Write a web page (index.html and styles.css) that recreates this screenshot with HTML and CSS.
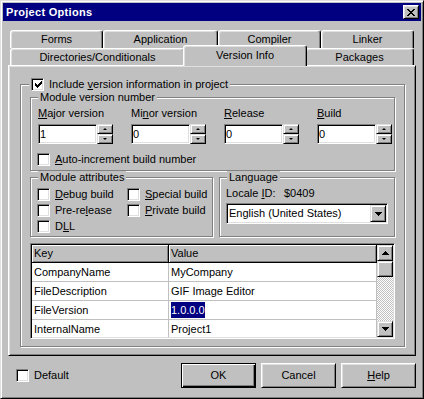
FILE: index.html
```html
<!DOCTYPE html>
<html>
  <head>
    <meta charset="utf-8" />
    <meta name="viewport" content="width=device-width, initial-scale=1.0" />
    <title>Project Options</title>
    <link rel="stylesheet" href="styles.css">
  </head>
  <body>
    <div class="window">
      <div class="titlebar">
        <span class="title">Project Options</span>
        <span class="close-btn">
          <svg width="8" height="7" viewBox="0 0 8 7" shape-rendering="crispEdges">
            <path d="M0 0h2v1H0zM6 0h2v1H6zM1 1h2v1H1zM5 1h2v1H5zM2 2h4v1H2zM3 3h2v1H3zM2 4h4v1H2zM1 5h2v1H1zM5 5h2v1H5zM0 6h2v1H0zM6 6h2v1H6z" fill="#000" />
          </svg>
        </span>
      </div>

      <div class="tabs">
        <div class="tab-row back">
          <div class="tab" style="width: 93px">Forms</div>
          <div class="tab" style="width: 115px">Application</div>
          <div class="tab" style="width: 103px">Compiler</div>
          <div class="tab" style="width: 93px">Linker</div>
        </div>
        <div class="tab-row front">
          <div class="tab" style="width: 175px">Directories/Conditionals</div>
          <div class="tab active" style="width: 124px">Version Info</div>
          <div class="tab" style="width: 109px">Packages</div>
        </div>
      </div>

      <div class="page">
        <div class="group outer">
          <label class="group-title">
            <span class="check">
              <svg width="7" height="7" viewBox="0 0 7 7" shape-rendering="crispEdges">
                <path d="M6 0h1v1H6zM5 1h2v1H5zM0 2h1v1H0zM4 2h3v1H4zM0 3h2v1H0zM3 3h3v1H3zM0 4h5v1H0zM1 5h3v1H1zM2 6h1v1H2z" fill="#000" />
              </svg>
            </span>
            <span>Include <u>v</u>ersion information in project</span>
          </label>

          <div class="group module">
            <span class="group-title">Module version number</span>
            <div class="fields">
              <div class="field">
                <span class="label"><u>M</u>ajor version</span>
                <div class="spin-edit">
                  <div class="edit">1</div>
                  <div class="spin">
                    <span class="spin-btn"><i class="tri-up"></i></span>
                    <span class="spin-btn"><i class="tri-down"></i></span>
                  </div>
                </div>
              </div>
              <div class="field">
                <span class="label">Mi<u>n</u>or version</span>
                <div class="spin-edit">
                  <div class="edit">0</div>
                  <div class="spin">
                    <span class="spin-btn"><i class="tri-up"></i></span>
                    <span class="spin-btn"><i class="tri-down"></i></span>
                  </div>
                </div>
              </div>
              <div class="field">
                <span class="label"><u>R</u>elease</span>
                <div class="spin-edit">
                  <div class="edit">0</div>
                  <div class="spin">
                    <span class="spin-btn"><i class="tri-up"></i></span>
                    <span class="spin-btn"><i class="tri-down"></i></span>
                  </div>
                </div>
              </div>
              <div class="field">
                <span class="label"><u>B</u>uild</span>
                <div class="spin-edit">
                  <div class="edit">0</div>
                  <div class="spin">
                    <span class="spin-btn"><i class="tri-up"></i></span>
                    <span class="spin-btn"><i class="tri-down"></i></span>
                  </div>
                </div>
              </div>
            </div>
            <label class="check-row auto">
              <span class="check"></span>
              <span><u>A</u>uto-increment build number</span>
            </label>
          </div>

          <div class="row2">
            <div class="group attrs">
              <span class="group-title">Module attributes</span>
              <div class="check-grid">
                <label class="check-row"><span class="check"></span><span><u>D</u>ebug build</span></label>
                <label class="check-row"><span class="check"></span><span><u>S</u>pecial build</span></label>
                <label class="check-row"><span class="check"></span><span>Pre-re<u>l</u>ease</span></label>
                <label class="check-row"><span class="check"></span><span><u>P</u>rivate build</span></label>
                <label class="check-row"><span class="check"></span><span>D<u>L</u>L</span></label>
              </div>
            </div>
            <div class="group lang">
              <span class="group-title">Language</span>
              <div class="locale"><span class="locale-label">Locale <u>I</u>D:</span><span>$0409</span></div>
              <div class="combo">
                <span class="combo-text">English (United States)</span>
                <span class="combo-btn">
                  <svg width="7" height="4" viewBox="0 0 7 4" shape-rendering="crispEdges">
                    <path d="M0 0h7v1H6v1H5v1H4v1H3V3H2V2H1V1H0z" fill="#000" />
                  </svg>
                </span>
              </div>
            </div>
          </div>

          <div class="grid">
            <div class="grid-body">
              <div class="grid-row head">
                <div class="cell">Key</div>
                <div class="cell">Value</div>
              </div>
              <div class="grid-row">
                <div class="cell">CompanyName</div>
                <div class="cell">MyCompany</div>
              </div>
              <div class="grid-row">
                <div class="cell">FileDescription</div>
                <div class="cell">GIF Image Editor</div>
              </div>
              <div class="grid-row">
                <div class="cell">FileVersion</div>
                <div class="cell"><span class="selected">1.0.0.0</span></div>
              </div>
              <div class="grid-row">
                <div class="cell">InternalName</div>
                <div class="cell">Project1</div>
              </div>
            </div>
            <div class="scrollbar">
              <span class="sb-btn">
                <svg width="7" height="4" viewBox="0 0 7 4" shape-rendering="crispEdges">
                  <path d="M3 0h1v1h1v1h1v1h1v1H0V3h1V2h1V1h1z" fill="#000" />
                </svg>
              </span>
              <span class="sb-btn thumb"></span>
              <span class="sb-track"></span>
              <span class="sb-btn">
                <svg width="7" height="4" viewBox="0 0 7 4" shape-rendering="crispEdges">
                  <path d="M0 0h7v1H6v1H5v1H4v1H3V3H2V2H1V1H0z" fill="#000" />
                </svg>
              </span>
            </div>
          </div>
        </div>
      </div>

      <div class="footer">
        <label class="check-row">
          <span class="check"></span>
          <span>Default</span>
        </label>
        <div class="buttons">
          <span class="btn default">OK</span>
          <span class="btn">Cancel</span>
          <span class="btn"><u>H</u>elp</span>
        </div>
      </div>
    </div>
  </body>
</html>
```

FILE: styles.css
```css
body {
  margin: 0;
  padding: 0;
  background: #c0c0c0;
  color: #000;
  font: 11px "Liberation Sans", Arial, sans-serif;
}

u {
  text-underline-offset: 1px;
}

.window {
  box-sizing: border-box;
  width: 424px;
  height: 399px;
  padding: 2px;
  background: #c0c0c0;
  border: 1px solid;
  border-color: #dfdfdf #000 #000 #dfdfdf;
  box-shadow: inset 1px 1px #fff, inset -1px -1px #808080;
}

.titlebar {
  height: 18px;
  background: #000080;
  display: flex;
  align-items: center;
  justify-content: space-between;
  padding: 0 2px 0 3px;
}

.title {
  color: #fff;
  font-weight: bold;
  letter-spacing: 0.3px;
}

.close-btn {
  box-sizing: border-box;
  width: 16px;
  height: 14px;
  display: flex;
  align-items: center;
  justify-content: center;
  background: #c0c0c0;
  border: 1px solid;
  border-color: #fff #000 #000 #fff;
  box-shadow: inset 1px 1px #dfdfdf, inset -1px -1px #808080;
}

/* tabs */
.tabs {
  width: 404px;
  margin: 9px 0 0 7px;
}

.tab-row {
  display: flex;
}

.tab-row.back {
  height: 18px;
}

.tab-row.front {
  height: 17px;
}

.tab {
  box-sizing: border-box;
  height: 100%;
  display: flex;
  align-items: center;
  justify-content: center;
  padding-bottom: 1px;
  background: #c0c0c0;
  border: 1px solid;
  border-bottom: 0;
  border-color: #fff #000 #000 #fff;
  border-radius: 3px 3px 0 0;
  box-shadow: inset -1px 0 #808080, inset 1px 1px #dfdfdf;
}

.tab.active {
  position: relative;
  z-index: 1;
  height: 21px;
  margin: -3px -2px -1px;
  padding-bottom: 3px;
}

/* page */
.page {
  box-sizing: border-box;
  width: 408px;
  height: 291px;
  margin-left: 5px;
  padding: 18px 0 0 11px;
  border: 1px solid;
  border-color: #fff #000 #000 #fff;
  box-shadow: inset 1px 1px #dfdfdf, inset -1px -1px #808080;
}

.group {
  box-sizing: border-box;
  border: 1px solid #808080;
  box-shadow: inset 1px 1px #fff, 1px 1px #fff;
}

.group-title {
  display: flex;
  align-items: center;
  gap: 5px;
  width: fit-content;
  height: 13px;
  line-height: 13px;
  margin: -7px 0 0 7px;
  padding: 0 2px;
  background: #c0c0c0;
}

.group.outer {
  width: 385px;
  height: 263px;
}

.group.outer > .group-title {
  margin-left: 8px;
}

.check {
  box-sizing: border-box;
  flex: none;
  width: 13px;
  height: 13px;
  display: flex;
  align-items: center;
  justify-content: center;
  padding: 0 0 0 1px;
  background: #fff;
  border: 1px solid;
  border-color: #808080 #fff #fff #808080;
  box-shadow: inset 1px 1px #000, inset -1px -1px #dfdfdf;
}

.check-row {
  display: flex;
  align-items: center;
  gap: 5px;
  line-height: 13px;
}

/* module version number */
.group.module {
  width: 365px;
  height: 74px;
  margin: 6px 0 0 9px;
}

.fields {
  display: flex;
  gap: 18px;
  margin-top: 3px;
  padding-left: 7px;
}

.field {
  display: flex;
  flex-direction: column;
}

.label {
  line-height: 13px;
}

.spin-edit {
  display: flex;
  margin-top: 4px;
}

.edit,
.combo {
  box-sizing: border-box;
  background: #fff;
  border: 1px solid;
  border-color: #808080 #fff #fff #808080;
  box-shadow: inset 1px 1px #000, inset -1px -1px #dfdfdf;
}

.edit {
  width: 59px;
  height: 20px;
  padding-left: 1px;
  line-height: 18px;
}

.spin {
  width: 16px;
  height: 20px;
  display: flex;
  flex-direction: column;
}

.spin-btn,
.sb-btn,
.combo-btn,
.btn {
  box-sizing: border-box;
  display: flex;
  align-items: center;
  justify-content: center;
  background: #c0c0c0;
  border: 1px solid;
  border-color: #dfdfdf #000 #000 #dfdfdf;
  box-shadow: inset 1px 1px #fff, inset -1px -1px #808080;
}

.spin-btn {
  height: 10px;
}

.tri-up,
.tri-down {
  width: 0;
  height: 0;
  border-left: 2px solid transparent;
  border-right: 2px solid transparent;
}

.tri-up {
  border-bottom: 2px solid #000;
}

.tri-down {
  border-top: 2px solid #000;
}

.check-row.auto {
  margin: 9px 0 0 6px;
}

/* attributes and language */
.row2 {
  display: flex;
  gap: 6px;
  margin: 6px 0 0 9px;
}

.group.attrs {
  width: 183px;
  height: 60px;
}

.group.lang {
  width: 176px;
  height: 60px;
}

.check-grid {
  display: grid;
  grid-template-columns: 90px 90px;
  grid-auto-rows: 16px;
  align-items: center;
  margin-top: 2px;
  padding-left: 6px;
}

.locale {
  display: flex;
  margin-top: 3px;
  padding-left: 6px;
  line-height: 13px;
}

.locale-label {
  width: 58px;
}

.combo {
  width: 162px;
  height: 21px;
  margin: 3px 0 0 6px;
  padding: 1px;
  display: flex;
}

.combo-text {
  flex: 1;
  padding-left: 1px;
  line-height: 17px;
}

.combo-btn {
  width: 16px;
  height: 17px;
}

/* string grid */
.grid {
  box-sizing: border-box;
  width: 365px;
  height: 96px;
  margin: 6px 0 0 9px;
  padding: 1px;
  display: flex;
  overflow: hidden;
  background: #fff;
  border: 1px solid;
  border-color: #808080 #fff #fff #808080;
  box-shadow: inset 1px 1px #000, inset -1px -1px #dfdfdf;
}

.grid-body {
  flex: 1;
  overflow: hidden;
}

.grid-row {
  display: grid;
  grid-template-columns: 137px 1fr;
  height: 19px;
}

.cell {
  box-sizing: border-box;
  padding-left: 2px;
  line-height: 18px;
  white-space: nowrap;
  border-right: 1px solid #c0c0c0;
  border-bottom: 1px solid #c0c0c0;
}

.grid-row.head {
  height: 18px;
}

.grid-row.head .cell {
  line-height: 17px;
  background: #c0c0c0;
  border-color: #000;
  box-shadow: inset 1px 1px #fff, inset -1px -1px #808080;
}

.selected {
  display: inline-block;
  line-height: 16px;
  background: #000080;
  color: #fff;
}

.scrollbar {
  width: 16px;
  display: flex;
  flex-direction: column;
}

.sb-btn {
  flex: none;
  height: 16px;
}

.sb-track {
  flex: 1;
  background: repeating-conic-gradient(#fff 0 25%, #c0c0c0 0 50%) 0 0 / 2px 2px;
}

/* footer */
.footer {
  height: 25px;
  margin-top: 7px;
  padding: 0 5px 0 13px;
  display: flex;
  align-items: center;
}

.buttons {
  display: flex;
  gap: 5px;
  margin-left: auto;
}

.btn {
  width: 75px;
  height: 25px;
  padding-bottom: 1px;
  border-color: #fff #000 #000 #fff;
  box-shadow: inset 1px 1px #dfdfdf, inset -1px -1px #808080;
}

.btn.default {
  border-color: #000;
  box-shadow: inset 1px 1px #fff, inset -1px -1px #000, inset -2px -2px #808080;
}
```
